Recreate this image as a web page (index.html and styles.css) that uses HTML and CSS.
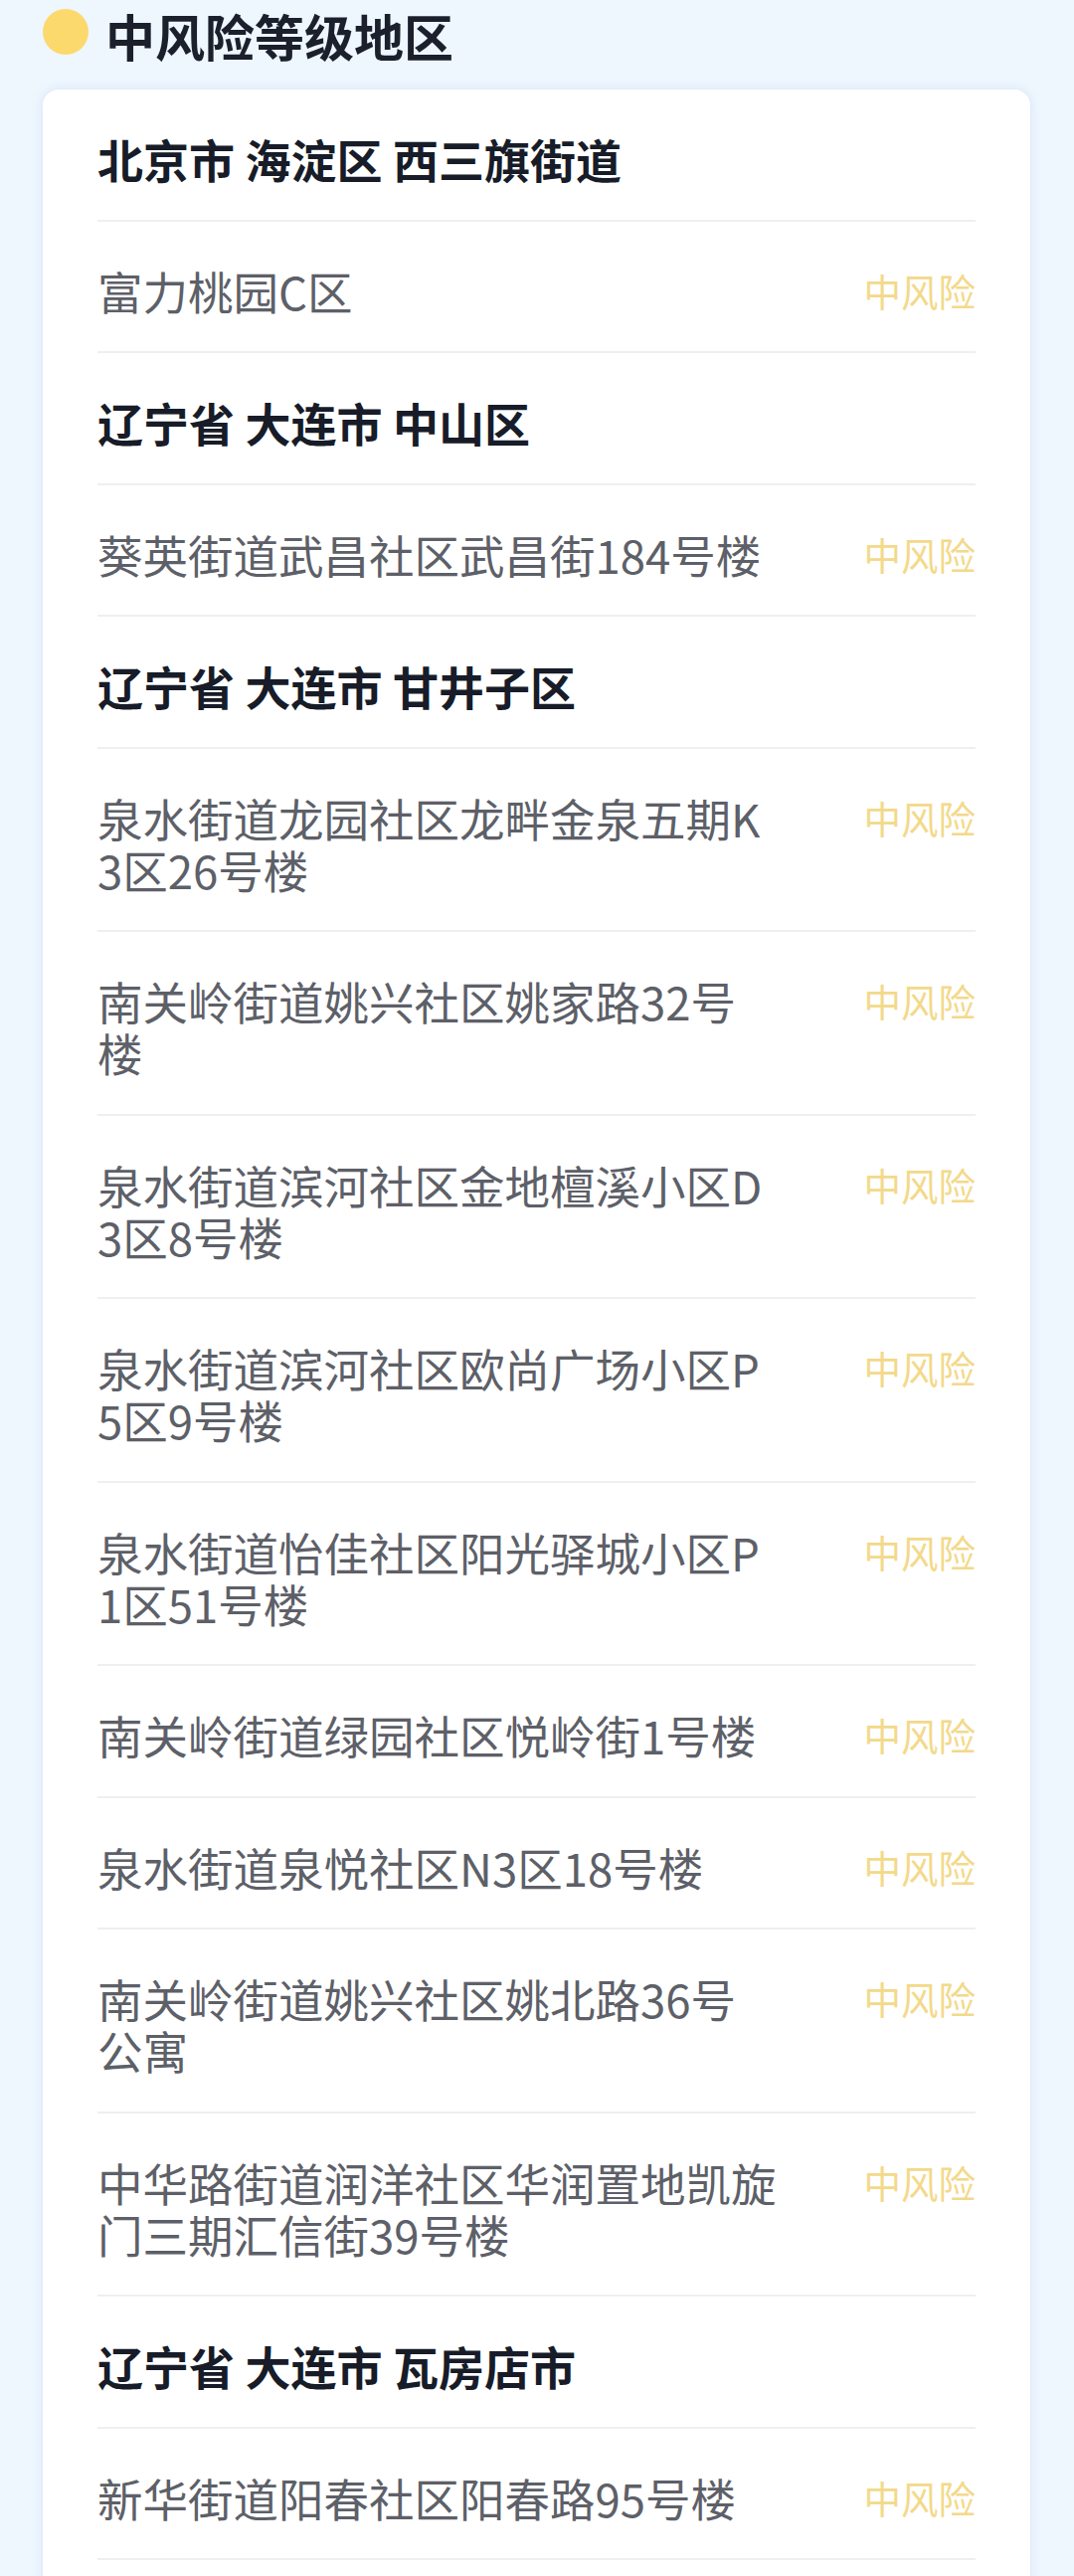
FILE: index.html
```html
<!DOCTYPE html>
<html lang="zh-CN">
<head>
  <meta charset="UTF-8">
  <meta name="viewport" content="width=device-width, initial-scale=1.0">
  <title>中风险等级地区</title>
  <link rel="stylesheet" href="styles.css">
</head>
<body>
  <section class="risk-section">
    <h2 class="section-title"><span class="dot"></span>中风险等级地区</h2>
    <div class="card">
      <div class="row area">北京市 海淀区 西三旗街道</div>
      <div class="row"><span class="addr">富力桃园C区</span><span class="level">中风险</span></div>

      <div class="row area">辽宁省 大连市 中山区</div>
      <div class="row"><span class="addr">葵英街道武昌社区武昌街184号楼</span><span class="level">中风险</span></div>

      <div class="row area">辽宁省 大连市 甘井子区</div>
      <div class="row"><span class="addr">泉水街道龙园社区龙畔金泉五期K3区26号楼</span><span class="level">中风险</span></div>
      <div class="row"><span class="addr">南关岭街道姚兴社区姚家路32号楼</span><span class="level">中风险</span></div>
      <div class="row"><span class="addr">泉水街道滨河社区金地檀溪小区D3区8号楼</span><span class="level">中风险</span></div>
      <div class="row"><span class="addr">泉水街道滨河社区欧尚广场小区P5区9号楼</span><span class="level">中风险</span></div>
      <div class="row"><span class="addr">泉水街道怡佳社区阳光驿城小区P1区51号楼</span><span class="level">中风险</span></div>
      <div class="row"><span class="addr">南关岭街道绿园社区悦岭街1号楼</span><span class="level">中风险</span></div>
      <div class="row"><span class="addr">泉水街道泉悦社区N3区18号楼</span><span class="level">中风险</span></div>
      <div class="row"><span class="addr">南关岭街道姚兴社区姚北路36号公寓</span><span class="level">中风险</span></div>
      <div class="row"><span class="addr">中华路街道润洋社区华润置地凯旋门三期汇信街39号楼</span><span class="level">中风险</span></div>

      <div class="row area">辽宁省 大连市 瓦房店市</div>
      <div class="row"><span class="addr">新华街道阳春社区阳春路95号楼</span><span class="level">中风险</span></div>
      <div class="row"><span class="addr">&nbsp;</span></div>
    </div>
  </section>
</body>
</html>
```

FILE: styles.css
```css
body {
  margin: 0;
  background: #eef6fe;
  font-family: "Noto Sans CJK SC", "Noto Sans", sans-serif;
}
.risk-section {
  padding: 0 44px 0 43px;
}
.section-title {
  display: flex;
  align-items: flex-start;
  gap: 17px;
  margin: 0 0 25px;
  padding-top: 5px;
  height: 60px;
  font-size: 50px;
  line-height: 60px;
  font-weight: 700;
  color: #1b202c;
}
.dot {
  flex: 0 0 46px;
  width: 46px;
  height: 46px;
  margin-top: 4px;
  border-radius: 50%;
  background: #fcd96c;
}
.card {
  background: #fff;
  border-radius: 16px;
  padding: 0 55px;
  box-shadow: 0 0 10px rgba(170, 195, 230, 0.35);
}
.row {
  display: flex;
  align-items: flex-start;
  padding: 43px 0 35.5px;
  border-bottom: 2px solid #eeeff1;
  font-size: 45.5px;
  line-height: 52px;
}
.area {
  font-size: 46px;
  font-weight: 700;
  color: #171c28;
}
.addr {
  width: 684px;
  color: #5d6068;
  word-break: break-all;
}
.level {
  margin-left: auto;
  font-size: 37.5px;
  color: #f3d98a;
}
```
